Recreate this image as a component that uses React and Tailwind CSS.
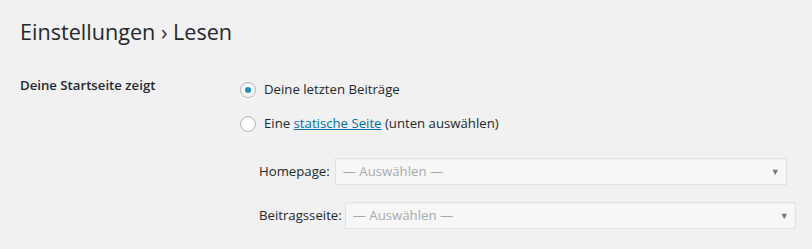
import React from 'react';

function Radio({ checked }) {
  return (
    <span className="flex h-4 w-4 shrink-0 items-center justify-center rounded-full border border-[#b4b9be] bg-white shadow-[inset_0_1px_2px_rgba(0,0,0,0.1)]">
      {checked && <span className="h-1.5 w-1.5 rounded-full bg-[#1e8cbe]" />}
    </span>
  );
}

function Select({ width }) {
  return (
    <div
      className="flex h-[27px] items-center justify-between border border-[#e2e2e2] bg-[#f7f7f7] pl-[7px] pr-[6px] text-[#a7aaad] shadow-[inset_0_1px_2px_rgba(0,0,0,0.04)]"
      style={{ width }}
    >
      <span>— Auswählen —</span>
      <span className="text-[9px] text-[#7a7a7a]">▼</span>
    </div>
  );
}

export default function App() {
  return (
    <div className="min-h-[249px] w-[812px] bg-[#f1f1f1] pl-5 font-['Open_Sans',sans-serif] text-[#23282d]">
      <h1 className="pt-[17px] text-[21.6px] leading-[30px] font-normal">Einstellungen › Lesen</h1>

      <div className="mt-[28px] flex">
        <div className="w-[220px] text-[13.2px] font-semibold leading-[20px]">Deine Startseite zeigt</div>

        <div className="mt-[5px] flex flex-col text-[13.2px]">
          <label className="flex h-[20px] items-center gap-2">
            <Radio checked />
            <span>Deine letzten Beiträge</span>
          </label>
          <label className="mt-[14px] flex h-[20px] items-center gap-2">
            <Radio />
            <span>
              Eine <a className="text-[#0073aa] underline">statische Seite</a> (unten auswählen)
            </span>
          </label>

          <div className="mt-[24px] flex flex-col gap-[17px] pl-[19px]">
            <div className="flex items-center gap-[5px]">
              <span>Homepage:</span>
              <Select width={452} />
            </div>
            <div className="flex items-center gap-[3px]">
              <span>Beitragsseite:</span>
              <Select width={451} />
            </div>
          </div>
        </div>
      </div>
    </div>
  );
}
